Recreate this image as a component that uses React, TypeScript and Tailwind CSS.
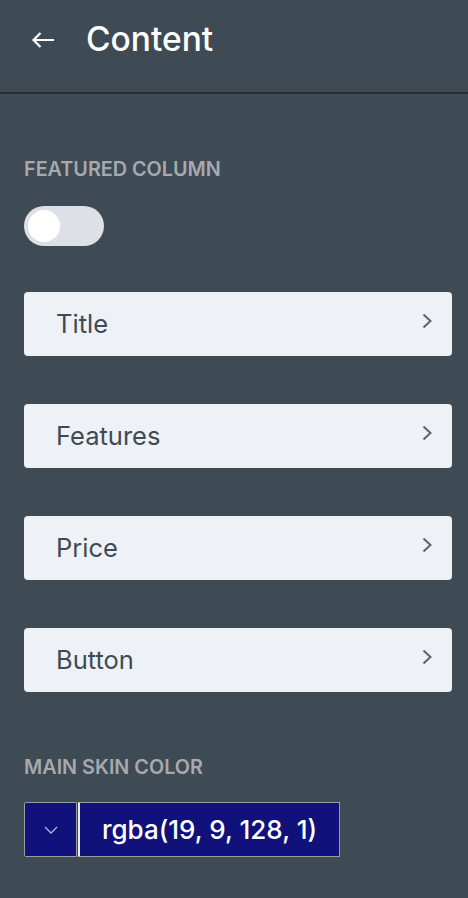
import React from "react";

const Chevron = () => (
  <svg width="10" height="16" viewBox="0 0 10 16" fill="none" className="mb-[7px]">
    <path d="M1.5 1.5 L8.5 8 L1.5 14.5" stroke="#5f6368" strokeWidth="2" strokeLinecap="butt" strokeLinejoin="miter" />
  </svg>
);

const Card = ({ label }: { label: string }) => (
  <div className="flex h-16 items-center justify-between rounded-[4px] bg-[#eef2f6] pl-8 pr-5">
    <span className="text-[25.5px] leading-none text-[#3e4a54]">{label}</span>
    <Chevron />
  </div>
);

export default function App() {
  return (
    <div
      className="min-h-[898px] w-[468px] bg-[#3e4a54]"
      style={{ fontFamily: "Inter, 'Noto Sans', sans-serif" }}
    >
      <div className="flex h-[92px] items-center pb-3 pl-[31px]">
        <svg width="24" height="18" viewBox="0 0 24 18" fill="none">
          <path d="M23 9 H2.5 M9.5 2 L2.5 9 L9.5 16" stroke="#ffffff" strokeWidth="2.2" strokeLinecap="butt" strokeLinejoin="miter" />
        </svg>
        <span className="ml-[31px] text-[33.5px] font-medium leading-none text-white">Content</span>
      </div>
      <div className="h-[2px] bg-[#2a2e31]" />
      <div className="flex flex-col pl-6 pr-4">
        <div className="mt-[65px] text-[19.8px] font-semibold leading-[20px] text-[#a6a9ae]">FEATURED COLUMN</div>
        <div className="mt-[27px] flex h-10 w-20 items-center rounded-full bg-[#dde0e7] pl-1">
          <div className="h-8 w-8 rounded-full bg-white" />
        </div>
        <div className="mt-[46px] flex flex-col gap-12">
          <Card label="Title" />
          <Card label="Features" />
          <Card label="Price" />
          <Card label="Button" />
        </div>
        <div className="mt-[65px] text-[19.8px] font-semibold leading-[20px] text-[#a6a9ae]">MAIN SKIN COLOR</div>
        <div className="mt-[25px] flex h-[55px]">
          <div className="flex w-[53px] items-center justify-center rounded-l-[2px] border border-[#9c9c9c] bg-[#10117a]">
            <svg width="14" height="8" viewBox="0 0 14 8" fill="none">
              <path d="M1 1 L7 7 L13 1" stroke="#b6b4d8" strokeWidth="1.3" />
            </svg>
          </div>
          <div className="ml-[1px] flex w-[262px] items-center justify-center border border-[#9c9c9c] border-l-[#e8e8e8] border-l-2 bg-[#10117a]">
            <span className="text-[26px] font-medium leading-none text-white">rgba(19, 9, 128, 1)</span>
          </div>
        </div>
      </div>
    </div>
  );
}
